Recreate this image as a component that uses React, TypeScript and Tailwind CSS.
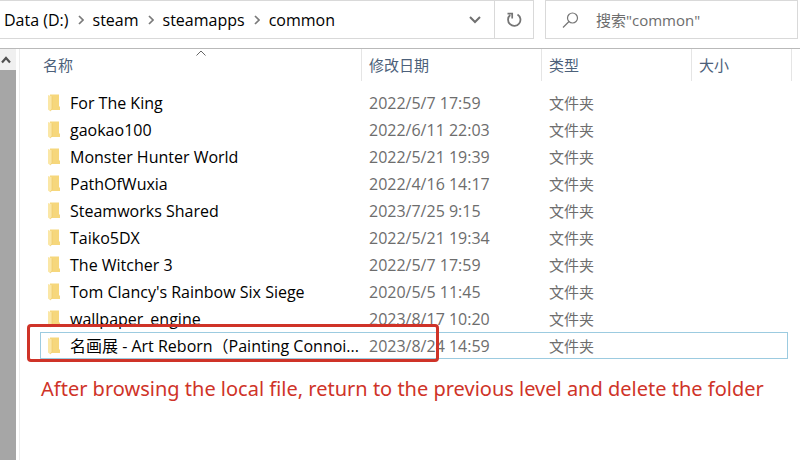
import { clsx } from "clsx";

type Folder = {
  name: string;
  modified: string;
  selected?: boolean;
};

const crumbs = ["Data (D:)", "steam", "steamapps", "common"];

const folders: Folder[] = [
  { name: "For The King", modified: "2022/5/7 17:59" },
  { name: "gaokao100", modified: "2022/6/11 22:03" },
  { name: "Monster Hunter World", modified: "2022/5/21 19:39" },
  { name: "PathOfWuxia", modified: "2022/4/16 14:17" },
  { name: "Steamworks Shared", modified: "2023/7/25 9:15" },
  { name: "Taiko5DX", modified: "2022/5/21 19:34" },
  { name: "The Witcher 3", modified: "2022/5/7 17:59" },
  { name: "Tom Clancy's Rainbow Six Siege", modified: "2020/5/5 11:45" },
  { name: "wallpaper_engine", modified: "2023/8/17 10:20" },
  { name: "名画展 - Art Reborn（Painting Connoi...", modified: "2023/8/24 14:59", selected: true },
];

function FolderIcon() {
  return (
    <svg width="12" height="18" viewBox="0 0 12 18" className="shrink-0" aria-hidden="true">
      <path d="M2 0.500H11V12L12 13V16H2Z" fill="#f6d77c" />
      <path d="M0 1L4 2.500V14.500L2.500 17.500L0 15.500Z" fill="#fbe7a6" />
      <path d="M4 2.500V14.500L2.500 17" fill="none" stroke="#edc866" strokeWidth="0.6" />
    </svg>
  );
}

function CrumbArrow() {
  return (
    <svg width="6" height="10" viewBox="0 0 6 10" fill="none" aria-hidden="true">
      <path d="M1 1L5 5L1 9" stroke="#7a7a7a" strokeWidth="1.7" />
    </svg>
  );
}

function AddressBar() {
  return (
    <div className="flex h-[39px] min-w-0 flex-1 border border-l-0 border-[#d9d9d9]">
      <nav className="flex min-w-0 flex-1 items-center gap-[9px] pl-1" aria-label="Path">
        {crumbs.map((c, i) => (
          <div key={c} className="flex items-center gap-[9px]">
            {i > 0 ? <CrumbArrow /> : null}
            <a href="#" className="whitespace-nowrap text-black">
              {c}
            </a>
          </div>
        ))}
      </nav>
      <button type="button" aria-label="Previous locations" className="flex w-[38px] items-center justify-center">
        <svg width="12" height="8" viewBox="0 0 12 8" fill="none">
          <path d="M1 1L6 6L11 1" stroke="#707070" strokeWidth="2" />
        </svg>
      </button>
      <button
        type="button"
        aria-label="Refresh"
        className="flex w-[39px] items-center justify-center border-l border-[#d9d9d9]"
      >
        <svg width="16" height="16" viewBox="0 0 16 16" fill="none">
          <path d="M11.500 2.400A6.200 6.200 0 1 1 4.200 3" stroke="#757575" strokeWidth="1.800" />
          <path d="M1.500 1.700H6.200V6.500" stroke="#757575" strokeWidth="1.700" />
        </svg>
      </button>
    </div>
  );
}

function SearchBox() {
  return (
    <label className="flex h-[39px] w-[253px] shrink-0 items-center gap-[17px] border border-[#d9d9d9] pl-4">
      <svg width="17" height="16" viewBox="0 0 17 16" fill="none" aria-hidden="true">
        <circle cx="10.500" cy="6" r="5" stroke="#777" strokeWidth="1.200" />
        <path d="M7 9.500L1 15.500" stroke="#777" strokeWidth="1.200" />
      </svg>
      <input
        type="search"
        aria-label="Search"
        placeholder={'搜索"common"'}
        className="min-w-0 flex-1 bg-transparent text-[15px] outline-none placeholder:text-[#6d6d6d]"
      />
    </label>
  );
}

function FolderRow({ folder }: { folder: Folder }) {
  const cell = clsx("flex h-[27px] items-center", folder.selected && "border-y border-[#9ccbe0]");

  return (
    <tr>
      <td className="p-0">
        <div className={clsx(cell, "relative gap-[10px]", folder.selected ? "border-l pl-[7px]" : "pl-2")}>
          <FolderIcon />
          <span className="whitespace-nowrap text-black">{folder.name}</span>
          {/* red marker drawn over the folder to delete */}
          {folder.selected ? (
            <div className="absolute -top-[9px] -left-[14px] h-[38px] w-[412px] rounded-[4px] border-3 border-[#cf3328]" />
          ) : null}
        </div>
      </td>
      <td className="p-0">
        <div className={clsx(cell, "pl-[7px]")}>{folder.modified}</div>
      </td>
      <td className="p-0">
        <div className={clsx(cell, "pl-[7px] text-[15px]")}>文件夹</div>
      </td>
      <td className="p-0">
        <div className={clsx(cell, "mr-1", folder.selected && "border-r")} />
      </td>
    </tr>
  );
}

export default function App() {
  return (
    <div className="flex min-h-screen flex-col bg-white font-['Open_Sans','Noto_Sans_CJK_SC',sans-serif] text-[16px] leading-5 text-[#6d6d6d]">
      <header className="flex gap-[11px] border-b border-[#b9b9b9] pr-[2px] pb-[9px]">
        <AddressBar />
        <SearchBox />
      </header>

      <div className="flex flex-1">
        <div className="flex w-4 shrink-0 flex-col bg-[#a6a6a6]">
          <button type="button" aria-label="Scroll up" className="flex h-[21px] items-center justify-center bg-[#f0f0f0] pr-1">
            <svg width="10" height="8" viewBox="0 0 10 8" fill="none">
              <path d="M1 6.500L5 2L9 6.500" stroke="#505050" strokeWidth="2.200" />
            </svg>
          </button>
        </div>

        <main className="ml-[3px] min-w-0 flex-1 border-l border-[#ececec] pr-2 pl-5">
          <table className="w-full table-fixed border-collapse">
            <thead>
              <tr className="text-left text-[15px] text-[#4c607a]">
                <th className="w-[322px] p-0 font-normal">
                  <div className="relative flex h-8 items-center border-r border-[#e5e5e5] pl-[3px]">
                    名称
                    <svg
                      width="10"
                      height="6"
                      viewBox="0 0 10 6"
                      fill="none"
                      className="absolute top-[1px] left-1/2 -translate-x-1/2"
                      aria-hidden="true"
                    >
                      <path d="M0.500 5.500L5 1L9.500 5.500" stroke="#666" />
                    </svg>
                  </div>
                </th>
                <th className="w-[180px] p-0 font-normal">
                  <div className="flex h-8 items-center border-r border-[#e5e5e5] pl-[7px]">修改日期</div>
                </th>
                <th className="w-[150px] p-0 font-normal">
                  <div className="flex h-8 items-center border-r border-[#e5e5e5] pl-[7px]">类型</div>
                </th>
                <th className="p-0 font-normal">
                  <div className="flex h-8 items-center border-r border-[#e5e5e5] pl-[7px]">大小</div>
                </th>
              </tr>
            </thead>
            <tbody className="before:block before:h-2">
              {folders.map((f) => (
                <FolderRow key={f.name} folder={f} />
              ))}
            </tbody>
          </table>

          <p className="mt-[14px] pl-px font-['Noto_Sans',sans-serif] text-[20px] leading-8 whitespace-nowrap text-[#cf3328]">
            After browsing the local file, return to the previous level and delete the folder
          </p>
        </main>
      </div>
    </div>
  );
}
